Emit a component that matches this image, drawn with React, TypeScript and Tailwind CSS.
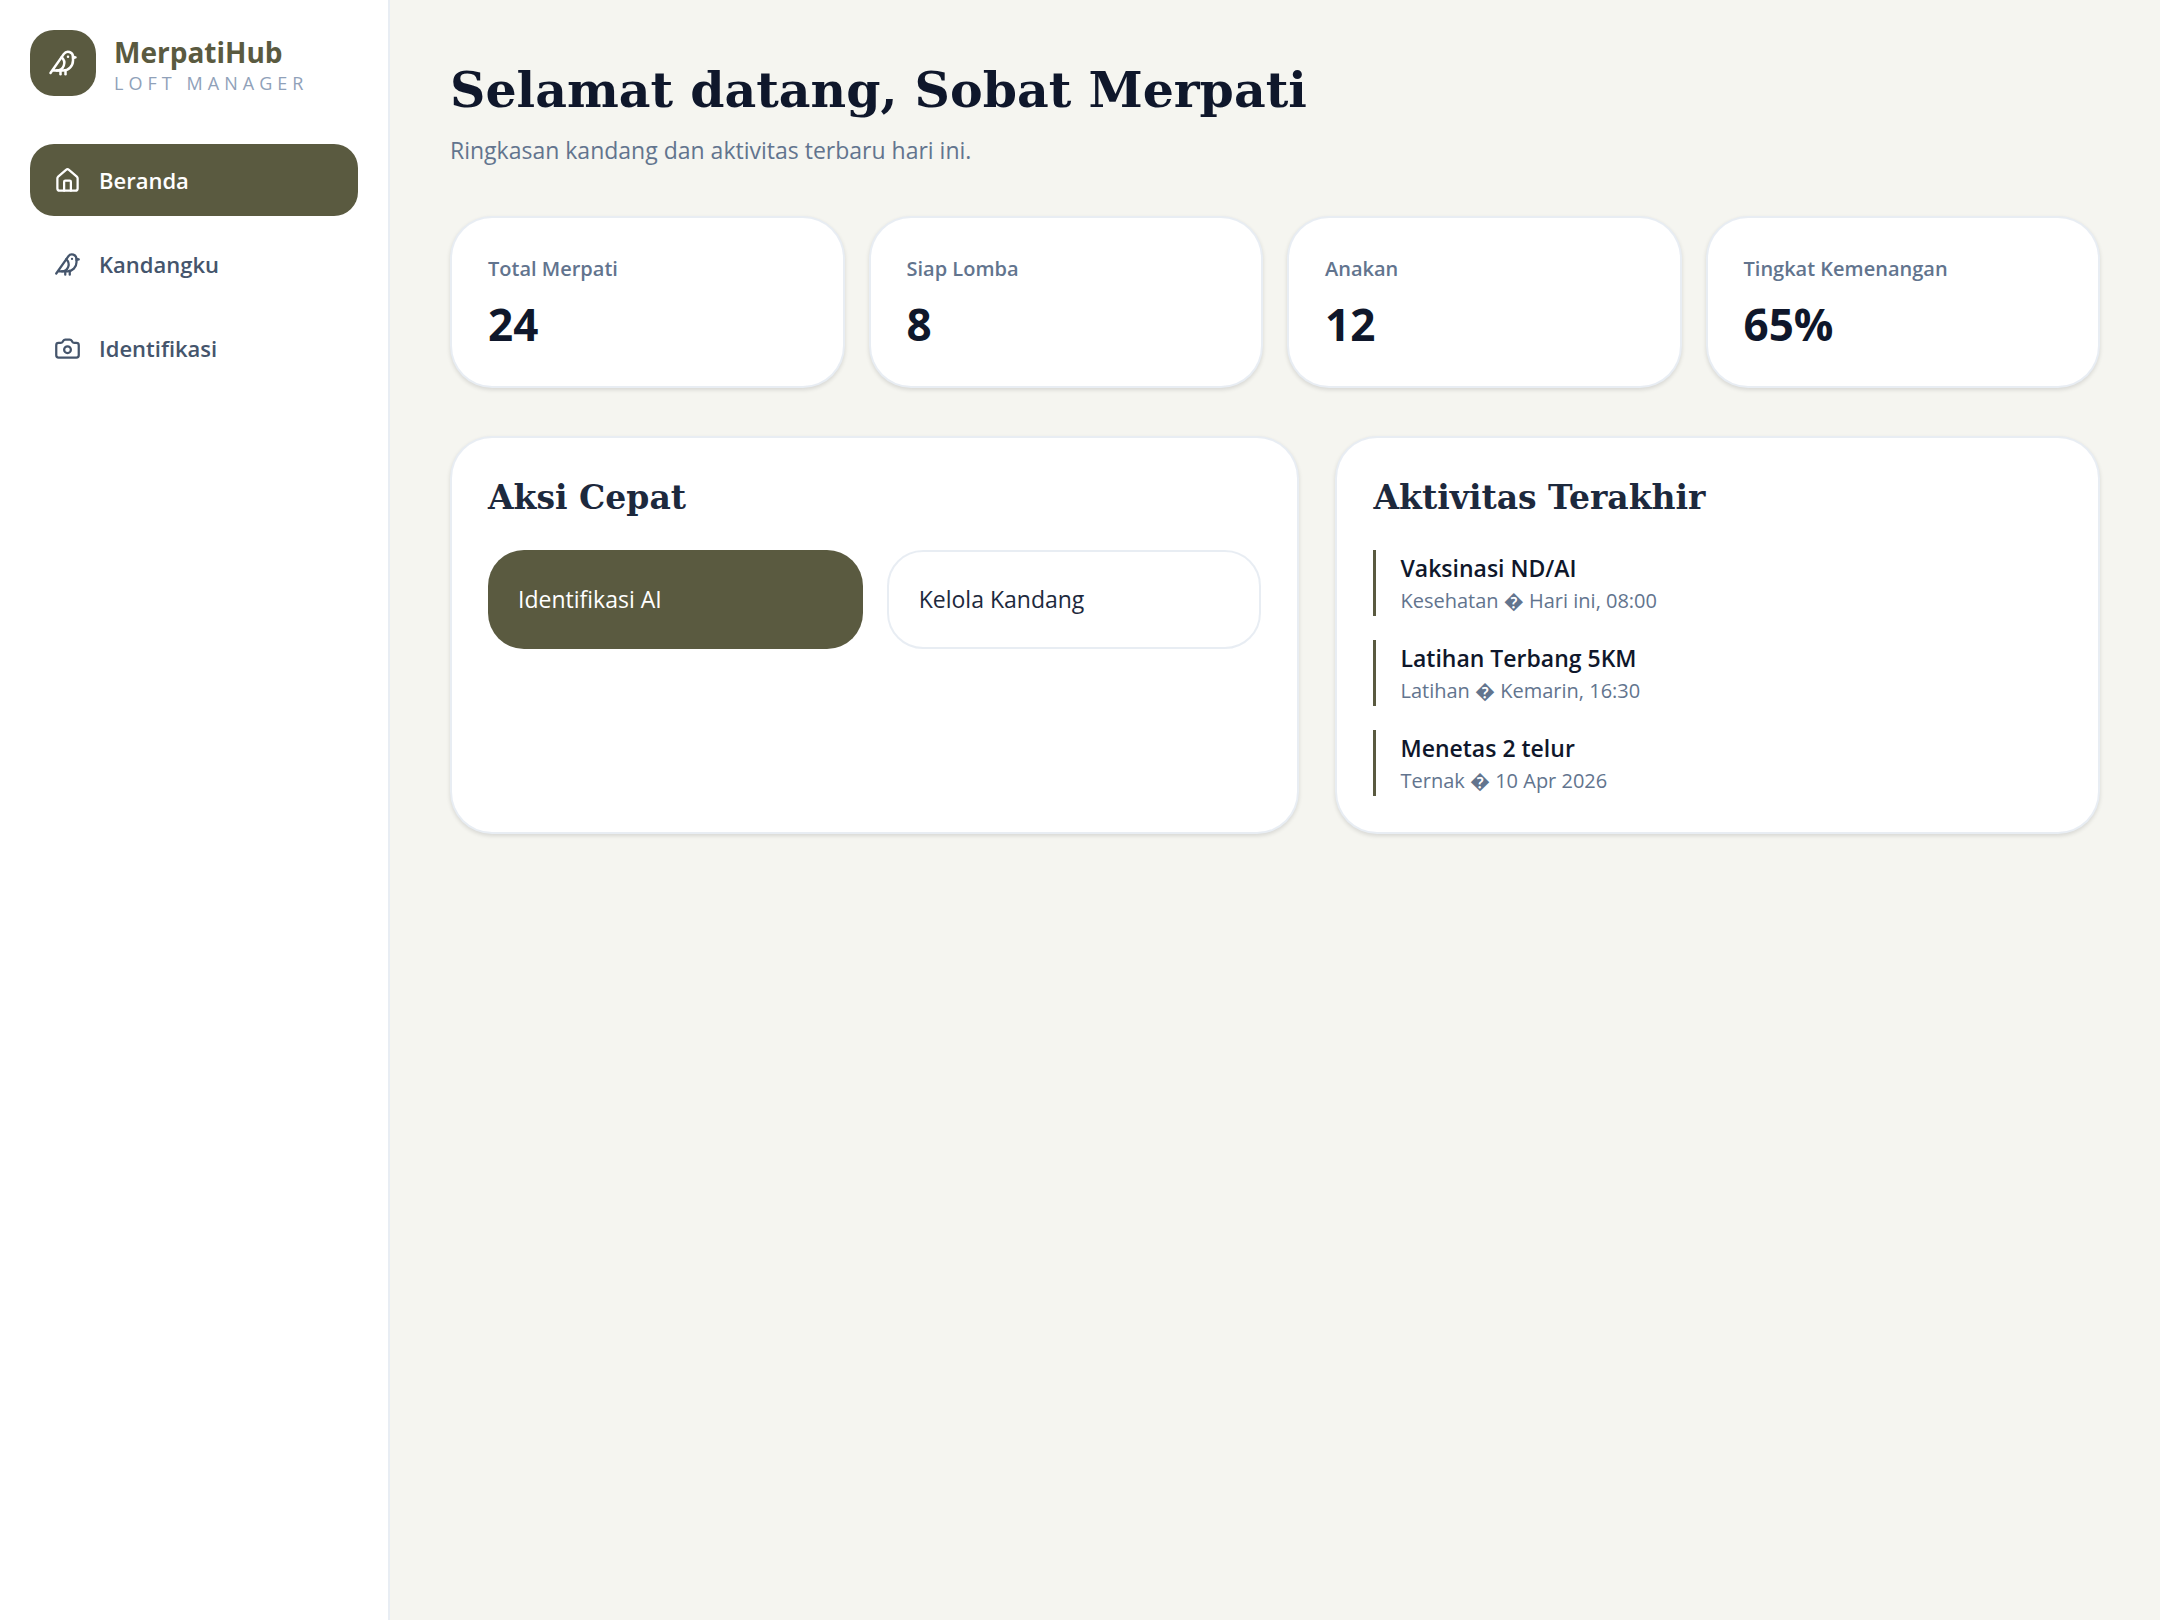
import React from 'react';
import { Bird, Camera, House } from 'lucide-react';
import type { LucideIcon } from 'lucide-react';

// ============================================
// DATA
// ============================================

interface NavItem {
  label: string;
  icon: LucideIcon;
  active?: boolean;
}

const navItems: NavItem[] = [
  { label: 'Beranda', icon: House, active: true },
  { label: 'Kandangku', icon: Bird },
  { label: 'Identifikasi', icon: Camera },
];

const stats = [
  { label: 'Total Merpati', value: '24' },
  { label: 'Siap Lomba', value: '8' },
  { label: 'Anakan', value: '12' },
  { label: 'Tingkat Kemenangan', value: '65%' },
];

const activities = [
  { title: 'Vaksinasi ND/AI', meta: 'Kesehatan \uFFFD Hari ini, 08:00' },
  { title: 'Latihan Terbang 5KM', meta: 'Latihan \uFFFD Kemarin, 16:30' },
  { title: 'Menetas 2 telur', meta: 'Ternak \uFFFD 10 Apr 2026' },
];

const card = 'rounded-[42px] border-2 border-slate-200/80 bg-white p-9 shadow-[0_2px_4px_rgba(0,0,0,0.12)]';
const cardTitle = "font-['DejaVu_Serif',Georgia,serif] text-[33px] leading-[48px] font-bold text-slate-800";

// ============================================
// SIDEBAR
// ============================================

function Sidebar() {
  return (
    <aside className="w-[390px] shrink-0 border-r-2 border-slate-200/80 bg-white p-[30px]">
      <div className="flex items-center gap-[18px]">
        <div className="flex size-[66px] items-center justify-center rounded-3xl bg-[#5a5a40] text-white">
          <Bird className="size-[30px]" />
        </div>
        <div className="pt-1">
          <p className="text-[28px] leading-9 font-bold text-[#5a5a40]">MerpatiHub</p>
          <p className="text-[18px] leading-[26px] tracking-[0.28em] text-slate-400 uppercase">Loft Manager</p>
        </div>
      </div>

      <nav className="mt-12 flex flex-col gap-3">
        {navItems.map(({ label, icon: Icon, active }) => (
          <button
            key={label}
            type="button"
            className={`flex h-[72px] items-center gap-[18px] rounded-3xl px-6 text-[22px] leading-9 font-semibold ${
              active ? 'bg-[#5a5a40] text-white' : 'text-slate-600'
            }`}
          >
            <Icon className="size-[27px]" />
            {label}
          </button>
        ))}
      </nav>
    </aside>
  );
}

// ============================================
// HOME PAGE
// ============================================

export default function App() {
  return (
    <div className="flex min-h-screen bg-[#f5f5f0] font-['Open_Sans',sans-serif] text-slate-900">
      <Sidebar />

      <main className="min-w-0 flex-1 p-[60px]">
        <header>
          <h1 className="font-['DejaVu_Serif',Georgia,serif] text-[49px] leading-[60px] font-bold">
            Selamat datang, Sobat Merpati
          </h1>
          <p className="mt-3 text-[23px] leading-9 text-slate-500">
            Ringkasan kandang dan aktivitas terbaru hari ini.
          </p>
        </header>

        {/* Stats */}
        <section className="mt-12 grid grid-cols-4 gap-6">
          {stats.map((stat) => (
            <div key={stat.label} className={card}>
              <p className="text-[20px] leading-[30px] font-semibold text-slate-500">{stat.label}</p>
              <p className="mt-[14px] text-[44px] leading-[52px] font-bold">{stat.value}</p>
            </div>
          ))}
        </section>

        <div className="mt-12 grid grid-cols-[10fr_9fr] gap-9">
          {/* Quick actions */}
          <section className={card}>
            <h2 className={cardTitle}>Aksi Cepat</h2>
            <div className="mt-7 grid grid-cols-2 gap-6">
              <button
                type="button"
                className="h-[99px] rounded-[36px] bg-[#5a5a40] px-[30px] text-left text-[23px] text-white"
              >
                Identifikasi AI
              </button>
              <button
                type="button"
                className="h-[99px] rounded-[36px] border-2 border-slate-200/80 px-[30px] text-left text-[23px] text-slate-800"
              >
                Kelola Kandang
              </button>
            </div>
          </section>

          {/* Recent activity */}
          <section className={card}>
            <h2 className={cardTitle}>Aktivitas Terakhir</h2>
            <ul className="mt-7 flex flex-col gap-6">
              {activities.map((activity) => (
                <li key={activity.title} className="border-l-3 border-[#5a5a40] pl-6">
                  <p className="text-[23px] leading-9 font-semibold">{activity.title}</p>
                  <p className="text-[20px] leading-[30px] text-slate-500">{activity.meta}</p>
                </li>
              ))}
            </ul>
          </section>
        </div>
      </main>
    </div>
  );
}
